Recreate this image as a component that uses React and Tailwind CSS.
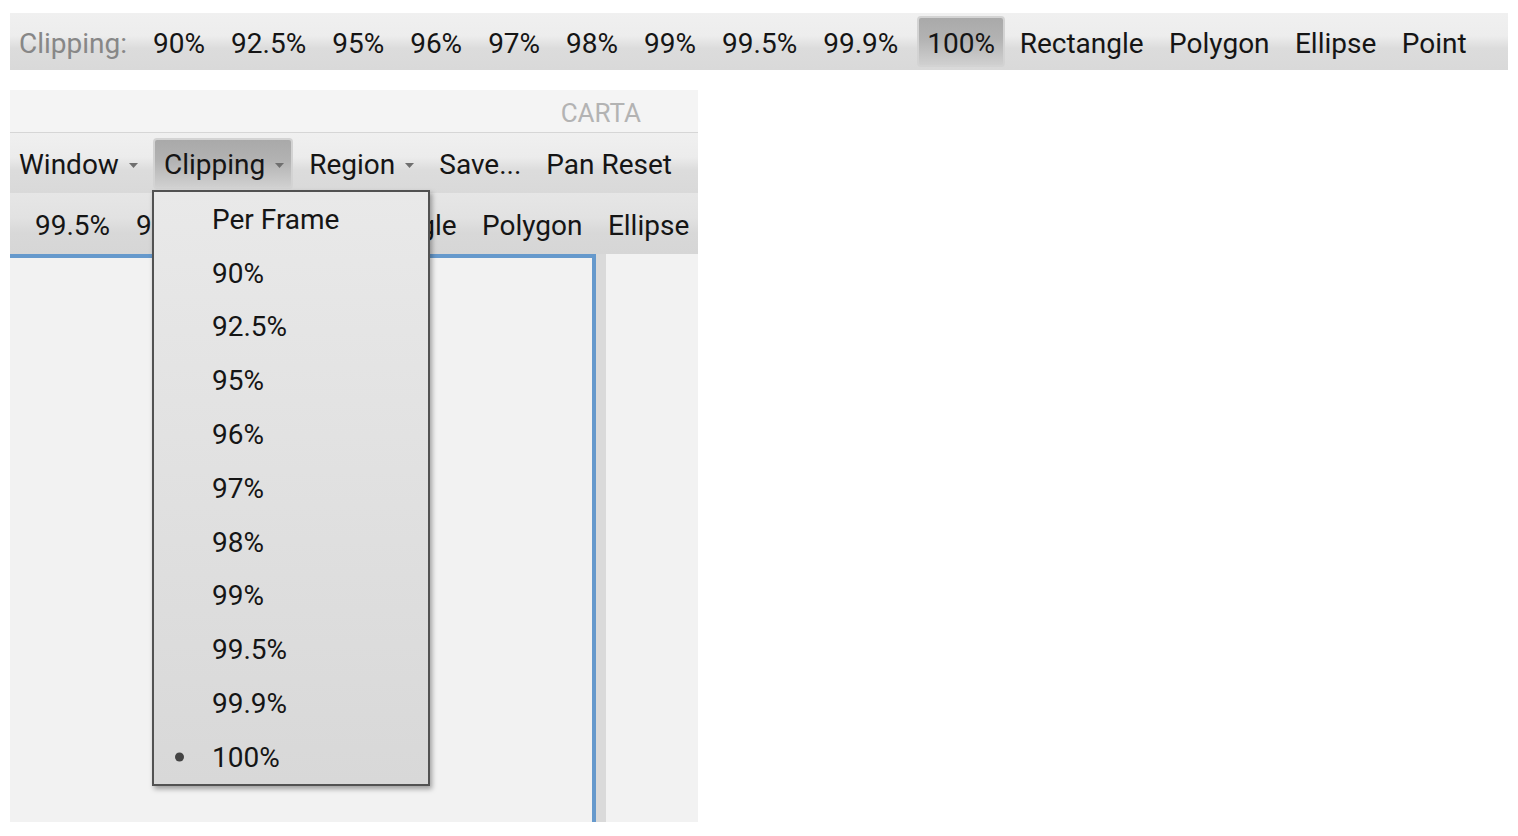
const font = { fontFamily: "Roboto, 'Liberation Sans', sans-serif" }

const levels = ['90%', '92.5%', '95%', '96%', '97%', '98%', '99%', '99.5%', '99.9%']
const shapes = ['Rectangle', 'Polygon', 'Ellipse', 'Point']
const menuItems = ['Per Frame', '90%', '92.5%', '95%', '96%', '97%', '98%', '99%', '99.5%', '99.9%', '100%']

function Arrow() {
  return (
    <svg width="9" height="5" viewBox="0 0 9 5" className="ml-[10px] shrink-0">
      <path d="M0 0 L9 0 L4.5 5 Z" fill="#6f6f6f" />
    </svg>
  )
}

function PressedBox({ children, className = '' }) {
  return (
    <div className={`flex items-center border-2 border-[#d3d3d3] rounded-[4px] bg-[linear-gradient(#a9a9a9_0%,#b3b3b3_45%,#d0d0d0_100%)] ${className}`}>
      {children}
    </div>
  )
}

function ToolItems({ items, pad = 'px-[13px]' }) {
  return items.map(t => (
    <span key={t} className={`${pad} shrink-0`}>{t}</span>
  ))
}

function ShapeItems() {
  return (
    <>
      <PressedBox className="ml-[6px] h-[51px] px-[8px] pt-[5px] shrink-0">100%</PressedBox>
      <div className="ml-[2px] flex pt-[5px]">
        <ToolItems items={shapes} pad="px-[12.7px]" />
      </div>
    </>
  )
}

export default function App() {
  return (
    <div className="min-h-[836px] bg-white pt-[13px] pl-[10px] text-[28px] text-[#151515]" style={font}>
      {/* top clipping toolbar */}
      <div className="w-[1498px] h-[57px] flex items-center pl-[9px] whitespace-nowrap bg-[linear-gradient(#f0f0f0_0%,#ededed_40%,#dcdcdc_62%,#d9d9d9_100%)]">
        <span className="text-[#878787] mr-[13px] pt-[5px]">Clipping:</span>
        <div className="flex pt-[5px]">
          <ToolItems items={levels} />
        </div>
        <ShapeItems />
      </div>

      {/* carta panel */}
      <div className="relative mt-[20px] w-[688px] h-[732px] flex flex-col bg-[#f2f2f2]">
        <div className="h-[43px] shrink-0 flex items-center justify-end pr-[57px] pt-[5px] bg-[#f4f4f4] border-b border-[#d6d6d6] text-[26px] text-[#b3b3b3]">
          CARTA
        </div>

        <div className="h-[60px] shrink-0 flex items-center pl-[9px] whitespace-nowrap bg-[linear-gradient(#f0f0f0_0%,#ececec_40%,#dcdcdc_62%,#d9d9d9_100%)]">
          <div className="flex items-center pt-[4px]">Window<Arrow /></div>
          <PressedBox className="ml-[15px] h-[51px] pl-[9px] pr-[7px] pt-[4px]">Clipping<Arrow /></PressedBox>
          <div className="ml-[16px] flex items-center pt-[4px]">Region<Arrow /></div>
          <span className="ml-[25px] pt-[4px]">Save...</span>
          <span className="ml-[25px] pt-[4px]">Pan Reset</span>
        </div>

        <div className="h-[61px] shrink-0 flex items-center pl-[12px] overflow-hidden whitespace-nowrap bg-[linear-gradient(#e6e6e6_0%,#e2e2e2_40%,#d8d8d8_65%,#d6d6d6_100%)]">
          <div className="flex pt-[5px]">
            <ToolItems items={['99.5%', '99.9%']} />
          </div>
          <ShapeItems />
        </div>

        <div className="flex-1 flex">
          <div className="flex-1 bg-[#f2f2f2] border-t-4 border-r-4 border-[#6699cc]" />
          <div className="w-[10px] bg-[#dadada]" />
          <div className="w-[92px] bg-[#f2f2f2]" />
        </div>

        {/* open clipping menu */}
        <div className="absolute left-[142px] top-[100px] w-[278px] border-2 border-[#525252] bg-[linear-gradient(#e9e9e9,#d8d8d8)] shadow-[2px_3px_5px_rgba(0,0,0,0.35)]">
          {menuItems.map(m => (
            <div key={m} className="relative h-[53.8px] flex items-center pl-[58px] pt-[2px]">
              {m === '100%' && (
                <span className="absolute left-[21px] top-1/2 -translate-y-1/2 w-[9px] h-[9px] rounded-full bg-[#444]" />
              )}
              {m}
            </div>
          ))}
        </div>
      </div>
    </div>
  )
}
